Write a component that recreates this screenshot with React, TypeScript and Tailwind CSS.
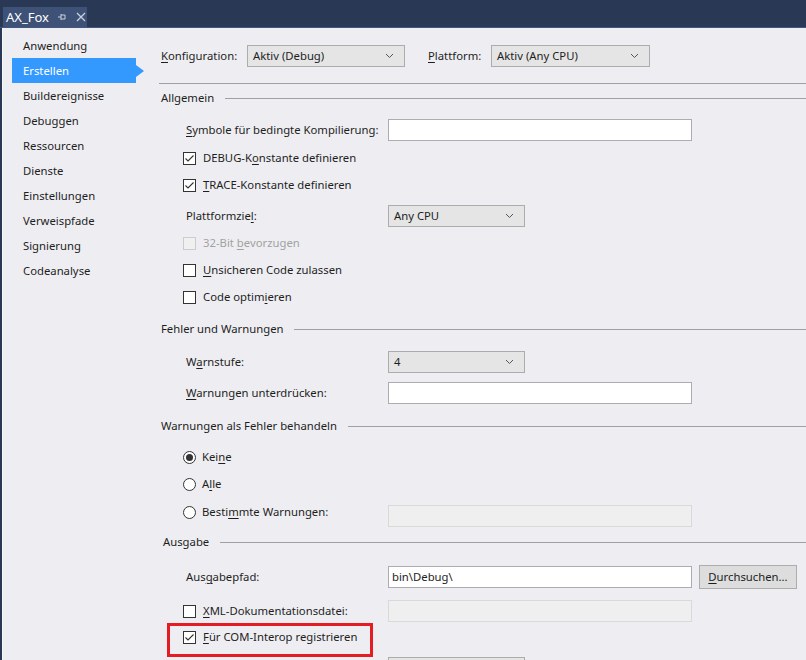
import React from "react";

const U = ({ children }: { children: React.ReactNode }) => (
  <span className="underline underline-offset-[2px] decoration-[1px]">{children}</span>
);

const Check = ({ checked, disabled }: { checked?: boolean; disabled?: boolean }) => (
  <span
    className={
      "w-[13px] h-[13px] shrink-0 border flex items-center justify-center " +
      (disabled ? "border-[#cccccc] bg-[#f0f0f0]" : "border-[#333333] bg-white")
    }
  >
    {checked && (
      <svg width="11" height="11" viewBox="0 0 11 11">
        <polyline points="1.5,5.5 4,8 9.5,2.5" fill="none" stroke="#333" strokeWidth="1.1" />
      </svg>
    )}
  </span>
);

const Radio = ({ checked }: { checked?: boolean }) => (
  <span className="w-[13px] h-[13px] shrink-0 rounded-full border border-[#333333] bg-white flex items-center justify-center">
    {checked && <span className="w-[7px] h-[7px] rounded-full bg-[#333333]" />}
  </span>
);

const Chevron = () => (
  <svg width="9" height="6" viewBox="0 0 9 6" className="shrink-0">
    <polyline points="1,1 4.5,4.5 8,1" fill="none" stroke="#555" strokeWidth="1" />
  </svg>
);

const Combo = ({ text, w }: { text: string; w: string }) => (
  <div className={"h-[22px] shrink-0 border border-[#acacac] bg-[#e5e5e5] flex items-center pl-[5px] pr-[10px] " + w}>
    <span className="flex-1 text-[#1e1e1e]">{text}</span>
    <Chevron />
  </div>
);

const TextBox = ({ value, disabled }: { value?: string; disabled?: boolean }) => (
  <div
    className={
      "h-[22px] w-[304px] shrink-0 border flex items-center pl-[3px] " +
      (disabled ? "border-[#d9d9d9] bg-[#efefef]" : "border-[#abadb3] bg-white")
    }
  >
    {value}
  </div>
);

const Section = ({ title, h, pl = "pl-[2px]" }: { title: string; h: string; pl?: string }) => (
  <div className={"flex items-center " + h + " " + pl}>
    <span>{title}</span>
    <span className="ml-[11px] flex-1 h-px bg-[#a0a0a0]" />
  </div>
);

const CheckRow = ({
  h,
  checked,
  disabled,
  children,
}: {
  h: string;
  checked?: boolean;
  disabled?: boolean;
  children: React.ReactNode;
}) => (
  <div className={"flex items-center pl-[24px] " + h}>
    <Check checked={checked} disabled={disabled} />
    <span className={"ml-[7px] " + (disabled ? "text-[#a2a2a2]" : "")}>{children}</span>
  </div>
);

const RadioRow = ({ h, checked, children }: { h: string; checked?: boolean; children: React.ReactNode }) => (
  <div className={"flex items-center pl-[24px] " + h}>
    <Radio checked={checked} />
    <span className="ml-[6px]">{children}</span>
  </div>
);

const sidebar = [
  "Anwendung",
  "Erstellen",
  "Buildereignisse",
  "Debuggen",
  "Ressourcen",
  "Dienste",
  "Einstellungen",
  "Verweispfade",
  "Signierung",
  "Codeanalyse",
];

export default function App() {
  return (
    <div className="w-[806px] h-[660px] overflow-hidden bg-[#eeeef2] flex flex-col font-['Noto_Sans',sans-serif] text-[11.3px] leading-[16px] text-[#1e1e1e] whitespace-nowrap">
      {/* top bar */}
      <div className="h-[28px] shrink-0 bg-[#293955] flex flex-col">
        <div className="flex-1 flex items-end pl-[3px]">
          <div className="h-[20px] w-[84px] bg-[#3e5176] flex items-center pl-[3px] text-white text-[13px]">
            <span>AX_Fox</span>
            <svg width="10" height="10" viewBox="0 0 10 10" className="ml-[8px]">
              <path d="M1 5 H4 M4 2 V8 M4 3 H8 V7 H4" fill="none" stroke="#c9d1de" strokeWidth="1" />
            </svg>
            <svg width="10" height="10" viewBox="0 0 10 10" className="ml-[9px]">
              <path d="M1 1 L9 9 M9 1 L1 9" fill="none" stroke="#c9d1de" strokeWidth="1.3" />
            </svg>
          </div>
        </div>
        <div className="h-[1px] bg-[#43567b]" />
      </div>

      <div className="flex-1 flex min-h-0">
        <div className="w-[2px] bg-[#293955] shrink-0" />
        {/* sidebar */}
        <div className="w-[157px] shrink-0 pt-[5px] border-l border-[#f7f7f9]">
          {sidebar.map((s) =>
            s === "Erstellen" ? (
              <div key={s} className="h-[25px] flex items-center ml-[9px]">
                <div className="h-[25px] w-[124px] bg-[#3399ff] text-white flex items-center pl-[11px]">{s}</div>
                <div className="w-0 h-0 border-y-[6px] border-y-transparent border-l-[8px] border-l-[#3399ff]" />
              </div>
            ) : (
              <div key={s} className="h-[25px] flex items-center pl-[20px]">
                {s}
              </div>
            )
          )}
        </div>

        {/* main */}
        <div className="flex-1 min-w-0 relative overflow-hidden">
          <div className="h-[17px]" />
          <div className="h-[22px] flex items-center pl-[2px]">
            <span className="w-[86px] shrink-0">
              <U>K</U>onfiguration:
            </span>
            <Combo text="Aktiv (Debug)" w="w-[158px]" />
            <span className="ml-[23px] w-[63px] shrink-0">
              <U>P</U>lattform:
            </span>
            <Combo text="Aktiv (Any CPU)" w="w-[159px]" />
          </div>
          <div className="h-[16px]" />
          <div className="h-px bg-[#a0a0a0]" />

          <Section title="Allgemein" h="h-[28px]" />
          <div className="h-[36px] flex items-center pl-[27px]">
            <span className="w-[202px] shrink-0">
              <U>S</U>ymbole für bedingte Kompilierung:
            </span>
            <TextBox />
          </div>
          <CheckRow h="h-[20px]" checked>
            DEBUG-K<U>o</U>nstante definieren
          </CheckRow>
          <CheckRow h="h-[34px]" checked>
            <U>T</U>RACE-Konstante definieren
          </CheckRow>
          <div className="h-[27px] flex items-center pl-[27px]">
            <span className="w-[202px] shrink-0">
              Plattformzie<U>l</U>:
            </span>
            <Combo text="Any CPU" w="w-[137px]" />
          </div>
          <CheckRow h="h-[28px]" disabled>
            32-Bit <U>b</U>evorzugen
          </CheckRow>
          <CheckRow h="h-[26px]">
            <U>U</U>nsicheren Code zulassen
          </CheckRow>
          <CheckRow h="h-[28px]">
            Code optim<U>i</U>eren
          </CheckRow>

          <Section title="Fehler und Warnungen" h="h-[36px]" />
          <div className="h-[29px] flex items-center pl-[27px]">
            <span className="w-[202px] shrink-0">
              W<U>a</U>rnstufe:
            </span>
            <Combo text="4" w="w-[137px]" />
          </div>
          <div className="h-[34px] flex items-center pl-[27px]">
            <span className="w-[202px] shrink-0">
              <U>W</U>arnungen unterdrücken:
            </span>
            <TextBox />
          </div>

          <Section title="Warnungen als Fehler behandeln" h="h-[32px]" />
          <RadioRow h="h-[30px]" checked>
            Kei<U>n</U>e
          </RadioRow>
          <RadioRow h="h-[24px]">
            A<U>l</U>le
          </RadioRow>
          <div className="h-[31px] flex items-start pl-[24px]">
            <div className="flex items-center mt-[8px] w-[205px] shrink-0">
              <Radio />
              <span className="ml-[6px]">
                Besti<U>m</U>mte Warnungen:
              </span>
            </div>
            <div className="mt-[9px]">
              <TextBox disabled />
            </div>
          </div>

          <Section title="Ausgabe" h="h-[30px]" pl="pl-[4px]" />
          <div className="h-[40px] flex items-center pl-[27px]">
            <span className="w-[202px] shrink-0">
              Aus<U>g</U>abepfad:
            </span>
            <TextBox value="bin\Debug\" />
            <button className="ml-[7px] h-[24px] w-[98px] shrink-0 border border-[#adadad] bg-[#dddddd] flex items-center justify-center">
              <span>
                <U>D</U>urchsuchen...
              </span>
            </button>
          </div>
          <div className="h-[28px] flex items-center pl-[24px]">
            <div className="flex items-center w-[205px] shrink-0">
              <Check />
              <span className="ml-[7px]">
                <U>X</U>ML-Dokumentationsdatei:
              </span>
            </div>
            <TextBox disabled />
          </div>
          <div className="h-[24px] flex items-center pl-[24px] relative">
            <Check checked />
            <span className="ml-[7px]">
              <U>F</U>ür COM-Interop registrieren
            </span>
            <div className="absolute left-[8px] top-[-2px] w-[206px] h-[34px] border-[3px] border-[#e31d23]" />
          </div>
          <div className="h-[8px]" />
          <div className="pl-[229px]">
            <div className="h-[22px] w-[137px] border border-[#acacac] bg-[#e5e5e5]" />
          </div>
        </div>
      </div>
    </div>
  );
}
